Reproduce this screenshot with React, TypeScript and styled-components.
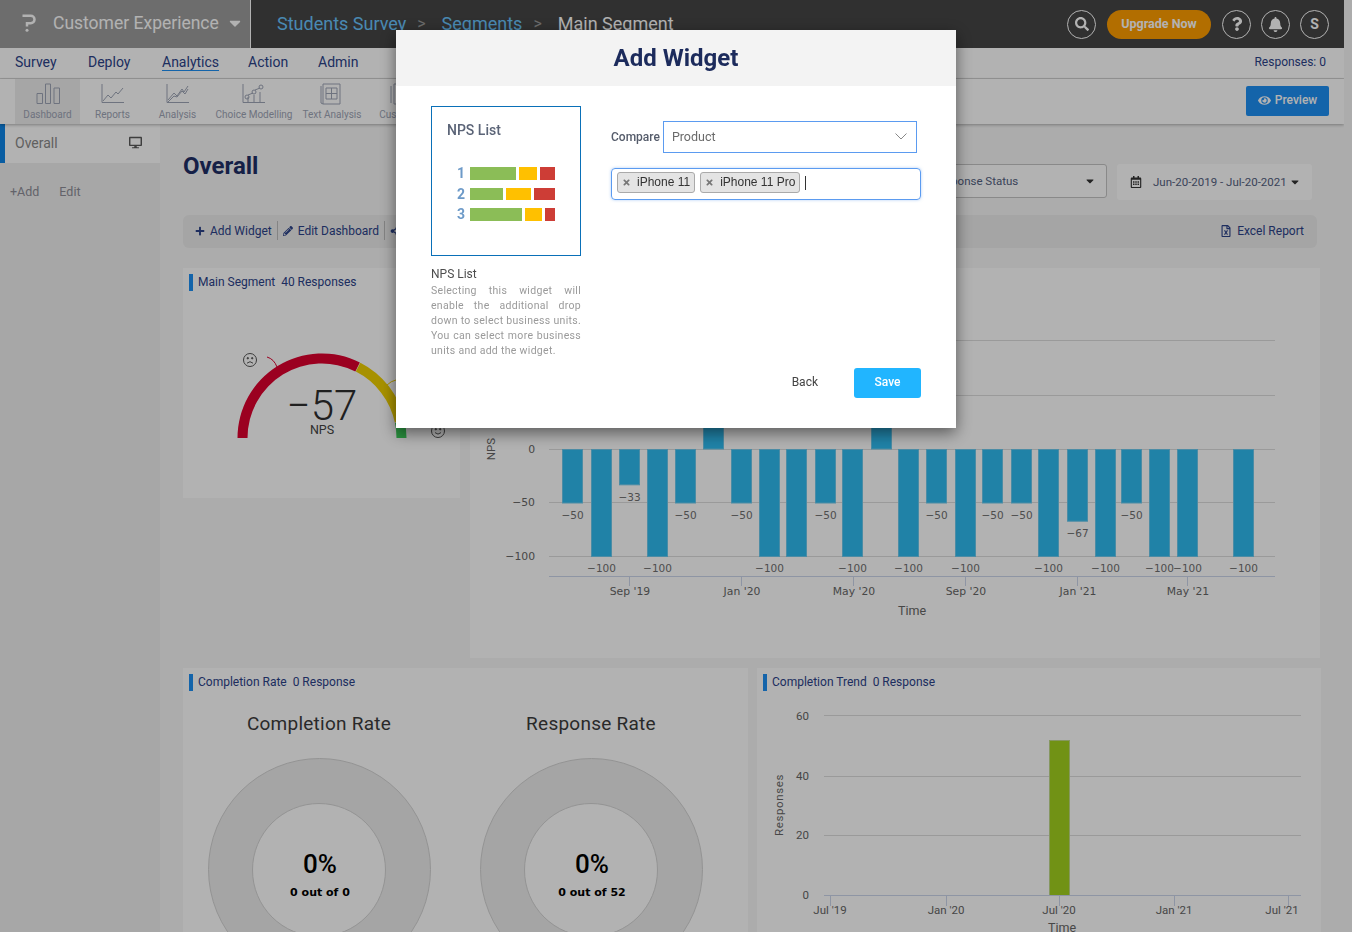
import React from "react";
import styled, { createGlobalStyle } from "styled-components";
import {
  FaBell,
  FaCaretDown,
  FaDesktop,
  FaEye,
  FaPencilAlt,
  FaPlus,
  FaQuestion,
  FaRegCalendarAlt,
  FaRegFileExcel,
  FaSearch,
  FaShareAlt,
  FaTimes,
} from "react-icons/fa";

const GlobalStyle = createGlobalStyle`
  html, body {
    margin: 0;
    padding: 0;
    height: 932px;
    overflow: hidden;
    background: #f7f7f7;
    font-family: Roboto, "Noto Sans", sans-serif;
    color: #2b4289;
  }
  * { box-sizing: border-box; }
`;

const Shell = styled.div`
  width: 1344px;
  height: 932px;
  overflow: hidden;
`;

const TopBar = styled.header`
  height: 48px;
  background: #454545;
  display: flex;
  align-items: center;
  color: #fff;
`;

const Brand = styled.div`
  width: 251px;
  height: 48px;
  padding: 0 0 2px 22px;
  background: #9d9d9d;
  border-right: 1px solid #fff;
  display: flex;
  align-items: center;
  font-size: 17.5px;
  white-space: nowrap;
  svg:first-child { margin-right: 17px; }
  svg:last-child { margin-left: 7px; }
`;

const Crumbs = styled.div`
  display: flex;
  align-items: center;
  padding: 0 0 2px 26px;
  font-size: 18px;
  flex: 1;
`;

const Crumb = styled.span<{ $active?: boolean }>`
  color: ${(p) => (p.$active ? "#ffffff" : "#6ac5ff")};
`;

const CrumbSep = styled.span`
  color: #9a9a9a;
  font-size: 16px;
  margin: 0 16px 0 11px;
`;

const TopActions = styled.div`
  display: flex;
  align-items: center;
  gap: 10px;
  padding-right: 15px;
`;

const RoundBtn = styled.div`
  width: 29px;
  height: 29px;
  border-radius: 50%;
  border: 1px solid #fff;
  display: flex;
  align-items: center;
  justify-content: center;
  font-size: 14px;
  font-weight: 700;
`;

const Upgrade = styled.div`
  width: 104px;
  height: 29px;
  margin: 0 1px;
  border-radius: 15px;
  background: #ff9e00;
  display: flex;
  align-items: center;
  justify-content: center;
  font-size: 12.5px;
  font-weight: 700;
  padding-bottom: 1px;
`;

const MenuBar = styled.nav`
  height: 31px;
  background: #fff;
  border-bottom: 1px solid #d8d8d8;
  display: flex;
  align-items: center;
  padding: 0 18px 2px 15px;
  font-size: 14px;
  color: #2b4289;
`;

const MenuItem = styled.span<{ $active?: boolean; $w: number }>`
  width: ${(p) => p.$w}px;
  span {
    border-bottom: ${(p) => (p.$active ? "1px solid #1e90f4" : "none")};
  }
`;

const Responses = styled.span`
  margin-left: auto;
  font-size: 12px;
`;

const ToolBar = styled.div`
  height: 45px;
  background: #fff;
  display: flex;
  align-items: stretch;
  padding: 0 15px;
  box-shadow: 0 1px 3px rgba(0, 0, 0, 0.3);
  position: relative;
`;

const Tool = styled.div<{ $active?: boolean; $w: number }>`
  width: ${(p) => p.$w}px;
  background: ${(p) => (p.$active ? "#eeeeee" : "transparent")};
  display: flex;
  flex-direction: column;
  align-items: center;
  padding-top: 4px;
  font-size: 10px;
  color: #9ea5b6;
  white-space: nowrap;
  svg { margin-bottom: 4px; }
`;

const PreviewBtn = styled.div`
  margin: 7px 0 8px auto;
  width: 83px;
  padding-bottom: 2px;
  background: #1e90f4;
  border-radius: 2px;
  color: #fff;
  font-size: 12px;
  font-weight: 500;
  display: flex;
  align-items: center;
  justify-content: center;
  gap: 4px;
`;

const Content = styled.div`
  display: flex;
  height: 808px;
`;

const SideBar = styled.aside`
  width: 160px;
  background: #f0f0f0;
  flex-shrink: 0;
`;

const SideItem = styled.div`
  height: 39px;
  background: #fff;
  border-left: 5px solid #0e86e8;
  padding: 0 18px 2px 10px;
  display: flex;
  align-items: center;
  justify-content: space-between;
  font-size: 14px;
  color: #8a8a8a;
  svg { color: #5a5a5a; }
`;

const SideLinks = styled.div`
  display: flex;
  gap: 20px;
  padding: 21px 10px;
  font-size: 12.5px;
  color: #8e8e98;
`;

const Main = styled.main`
  flex: 1;
  padding: 28px 23px 0;
`;

const TitleRow = styled.div`
  height: 63px;
  display: flex;
  justify-content: space-between;
`;

const PageTitle = styled.h1`
  margin: 0;
  font-size: 24px;
  line-height: 28px;
  font-weight: 700;
  color: #1f2f66;
`;

const Filters = styled.div`
  display: flex;
  gap: 10px;
  margin: 12px 9px 0 0;
  font-size: 11.5px;
  color: #54617f;
`;

const StatusSelect = styled.div`
  width: 188px;
  height: 34px;
  border: 1px solid #c4c4c4;
  border-radius: 3px;
  background: #fff;
  display: flex;
  align-items: center;
  justify-content: space-between;
  padding: 0 10px 0 12px;
`;

const DateBox = styled.div`
  width: 195px;
  height: 36px;
  border-radius: 3px;
  background: #fff;
  display: flex;
  align-items: center;
  gap: 2px;
  padding: 0 0 1px 13px;
  span { margin-left: 9px; }
`;

const ActionBar = styled.div`
  height: 33px;
  margin-right: 4px;
  background: #ececec;
  border-radius: 6px;
  display: flex;
  align-items: center;
  padding: 0 13px 2px 12px;
  font-size: 12px;
  color: #2b4289;
`;

const ActionItem = styled.span`
  display: flex;
  align-items: center;
  gap: 5px;
  padding-right: 5px;
  margin-right: 5px;
  height: 19px;
  border-right: 1px solid #bdbdbd;
`;

const ExcelLink = styled.span`
  margin-left: auto;
  display: flex;
  align-items: center;
  gap: 5px;
`;

const UpperGrid = styled.div`
  display: grid;
  grid-template-columns: 277px 850px;
  gap: 10px;
  margin-top: 20px;
  align-items: start;
`;

const LowerGrid = styled.div`
  display: grid;
  grid-template-columns: 565px 564px;
  gap: 9px;
  margin-top: 10px;
`;

const Card = styled.section<{ $h: number }>`
  height: ${(p) => p.$h}px;
  background: #fff;
  padding-top: 6px;
  overflow: hidden;
`;

const CardHead = styled.div`
  height: 17px;
  margin-left: 6px;
  padding-left: 5px;
  border-left: 4px solid #1e90f4;
  font-size: 12px;
  line-height: 16px;
  color: #2b4289;
  white-space: pre;
`;

const NoHead = styled.div`
  height: 17px;
`;

const ChartSvg = styled.svg`
  display: block;
  margin-top: 6px;
  font-family: Roboto, sans-serif;
`;

const RateGrid = styled.div`
  display: grid;
  grid-template-columns: 272px 272px;
`;

const RateCol = styled.div`
  display: flex;
  flex-direction: column;
  align-items: center;
`;

const RateTitle = styled.div`
  margin-top: 21px;
  font-size: 19px;
  line-height: 24px;
  color: #3c3c3c;
  letter-spacing: 0.25px;
`;

const Donut = styled.div`
  margin-top: 22px;
  width: 223px;
  height: 223px;
  border-radius: 50%;
  background: #ececec;
  border: 1px solid #d4d4d4;
  display: flex;
  align-items: center;
  justify-content: center;
  flex-shrink: 0;
`;

const DonutHole = styled.div`
  width: 134px;
  height: 134px;
  border-radius: 50%;
  background: #fff;
  border: 1px solid #d4d4d4;
  display: flex;
  flex-direction: column;
  align-items: center;
  justify-content: center;
  color: #000;
  padding: 8px 0 0 2px;
`;

const DonutPct = styled.div`
  font-size: 26px;
  line-height: 30px;
  font-weight: 500;
`;

const DonutNote = styled.div`
  font-family: "DejaVu Sans", sans-serif;
  font-size: 11px;
  font-weight: 700;
  margin-top: 7px;
`;

const Overlay = styled.div`
  position: fixed;
  inset: 0;
  background: rgba(0, 0, 0, 0.3);
  display: flex;
  justify-content: center;
  padding-top: 30px;
`;

const Modal = styled.div`
  width: 560px;
  height: 398px;
  background: #fff;
  box-shadow: 0 5px 15px rgba(0, 0, 0, 0.5);
  display: flex;
  flex-direction: column;
`;

const ModalHead = styled.div`
  height: 56px;
  background: #f3f3f3;
  display: flex;
  align-items: center;
  justify-content: center;
  font-size: 24px;
  font-weight: 700;
  color: #1c2b5c;
`;

const ModalBody = styled.div`
  flex: 1;
  display: flex;
  gap: 30px;
  padding: 20px 35px 30px;
`;

const LeftCol = styled.div`
  width: 150px;
`;

const Thumb = styled.div`
  width: 150px;
  height: 150px;
  border: 1px solid #0a70b8;
  padding: 14px 15px;
`;

const ThumbTitle = styled.div`
  font-size: 14px;
  font-weight: 500;
  line-height: 18px;
  color: #5b6477;
  margin-bottom: 28px;
`;

const ThumbRow = styled.div`
  display: flex;
  align-items: center;
  height: 12.5px;
  margin-bottom: 8px;
  padding-left: 10px;
  gap: 3px;
  b {
    width: 10px;
    font-size: 14px;
    color: #6d9ac8;
  }
`;

const Seg = styled.i<{ $w: number; $c: string }>`
  display: block;
  height: 12.5px;
  width: ${(p) => p.$w}px;
  background: ${(p) => p.$c};
`;

const WidgetName = styled.div`
  margin-top: 11px;
  font-size: 12px;
  line-height: 15px;
  color: #4d4d4d;
`;

const WidgetDesc = styled.p`
  margin: 1px 0 0;
  font-size: 10.5px;
  line-height: 15px;
  letter-spacing: 0.3px;
  color: #9a9a9a;
  text-align: justify;
`;

const RightCol = styled.div`
  flex: 1;
  display: flex;
  flex-direction: column;
  padding-top: 15px;
`;

const CompareRow = styled.div`
  display: flex;
  align-items: center;
  gap: 3px;
  font-size: 12px;
  font-weight: 500;
  color: #555c6b;
`;

const CompareSelect = styled.div`
  width: 254px;
  height: 32px;
  border: 1px solid #5b9bf0;
  display: flex;
  align-items: center;
  justify-content: space-between;
  padding: 0 9px 2px 8px;
  font-size: 12.5px;
  font-weight: 400;
  color: #6a6a6a;
`;

const TagInput = styled.div`
  margin-top: 15px;
  height: 32px;
  border: 1px solid #5b9bf0;
  border-radius: 4px;
  box-shadow: 0 0 3px rgba(91, 155, 240, 0.5);
  display: flex;
  align-items: center;
  gap: 5px;
  padding: 0 0 3px 5px;
`;

const Tag = styled.span`
  height: 21px;
  border: 1px solid #aaa;
  border-radius: 3px;
  background: #e4e4e4;
  display: flex;
  align-items: center;
  gap: 6px;
  padding: 0 4px 1px;
  font-family: "Liberation Sans", sans-serif;
  font-size: 12px;
  color: #333;
  svg { color: #777; }
`;

const Caret = styled.span`
  width: 1px;
  height: 14px;
  background: #333;
`;

const ModalFooter = styled.div`
  margin-top: auto;
  display: flex;
  justify-content: flex-end;
  align-items: center;
  gap: 36px;
  font-size: 12px;
  color: #444;
  span { margin-bottom: 2px; }
`;

const SaveBtn = styled.div`
  width: 67px;
  height: 30px;
  padding-bottom: 2px;
  border-radius: 3px;
  background: #21b5ff;
  color: #fff;
  font-weight: 500;
  display: flex;
  align-items: center;
  justify-content: center;
`;

const bars: [number, number][] = [
  [562, -50], [591, -100], [619, -33], [647, -100], [675, -50], [703, 50],
  [731, -50], [759, -100], [786, -100], [815, -50], [842, -100], [871, 50],
  [898, -100], [926, -50], [955, -100], [982, -50], [1011, -50], [1038, -100],
  [1067, -67], [1095, -100], [1121, -50], [1149, -100], [1177, -100], [1233, -100],
];

const npsGrid = [340, 395, 449, 502, 556];

const npsTicks: [number, string][] = [
  [629, "Sep '19"], [741, "Jan '20"], [853, "May '20"],
  [965, "Sep '20"], [1077, "Jan '21"], [1187, "May '21"],
];

const trendTicks: [number, string, number][] = [
  [830, "Jul '19", 830], [946, "Jan '20", 946], [1059, "Jul '20", 1059],
  [1174, "Jan '21", 1174], [1288, "Jul '21", 1282],
];

const npsY = (v: number) => 449 - v * 1.07;

const NpsChart = () => (
  <ChartSvg width={850} height={361} viewBox="470 297 850 361">
    {npsGrid.map((y) => (
      <line key={y} x1={549} x2={1275} y1={y + 0.5} y2={y + 0.5} stroke="#dddddd" />
    ))}
    {[["0", 449], ["\u221250", 502], ["\u2212100", 556]].map(([t, y]) => (
      <text key={t} x={535} y={Number(y) + 4} textAnchor="end" fontSize={10.8} fill="#666" fontFamily="DejaVu Sans">
        {t}
      </text>
    ))}
    <text transform="translate(495 449) rotate(-90)" textAnchor="middle" fontSize={11.5} fill="#666">NPS</text>
    {bars.map(([x, v]) => (
      <rect
        key={x}
        x={x + 0.5}
        y={v < 0 ? 449.5 : npsY(v)}
        width={20}
        height={Math.abs(v) * 1.07}
        fill="#2ebbf0"
        stroke="#6cc9ec"
      />
    ))}
    {bars.filter(([x, v]) => v < 0 && x !== 786).map(([x, v]) => (
      <text
        key={x}
        x={x + 10.5}
        y={Math.floor(npsY(v)) + (v === -100 ? 16 : 17)}
        textAnchor="middle"
        fontSize={10.5}
        fill="#707070"
        fontFamily="DejaVu Sans"
      >
        {`\u2212${-v}`}
      </text>
    ))}
    <line x1={549} x2={1275} y1={576.5} y2={576.5} stroke="#ccd6eb" />
    {npsTicks.map(([x, label]) => (
      <g key={label}>
        <line x1={x + 0.5} x2={x + 0.5} y1={577} y2={586} stroke="#ccd6eb" />
        <text x={x + 1} y={595} textAnchor="middle" fontSize={10.8} fill="#666" fontFamily="DejaVu Sans">{label}</text>
      </g>
    ))}
    <text x={912} y={615} textAnchor="middle" fontSize={12.5} fill="#666">Time</text>
  </ChartSvg>
);

const TrendChart = () => (
  <ChartSvg width={564} height={235} viewBox="757 697 564 235">
    {[715, 776, 835].map((y) => (
      <line key={y} x1={824} x2={1301} y1={y + 0.5} y2={y + 0.5} stroke="#dddddd" />
    ))}
    {[[60, 720], [40, 780], [20, 839], [0, 899]].map(([v, y]) => (
      <text key={v} x={809} y={y} textAnchor="end" fontSize={11.5} fill="#666">{v}</text>
    ))}
    <text transform="translate(783 805) rotate(-90)" textAnchor="middle" fontSize={11.5} fill="#666" letterSpacing={0.6}>Responses</text>
    <rect x={1049.5} y={740.5} width={20} height={155} fill="#a2d11f" stroke="#c0d98b" />
    <line x1={824} x2={1301} y1={895.5} y2={895.5} stroke="#ccd6eb" />
    {trendTicks.map(([x, label, tx]) => (
      <g key={label}>
        <line x1={x + 0.5} x2={x + 0.5} y1={896} y2={906} stroke="#ccd6eb" />
        <text x={tx} y={914} textAnchor="middle" fontSize={11.5} fill="#666">{label}</text>
      </g>
    ))}
    <text x={1062} y={932} textAnchor="middle" fontSize={12.5} fill="#666">Time</text>
  </ChartSvg>
);

// slice of the half gauge, angles in degrees from +x
const arc = (a: number, b: number) => {
  const cx = 322;
  const cy = 438;
  const pt = (r: number, d: number) => {
    const t = (d * Math.PI) / 180;
    return `${(cx + r * Math.cos(t)).toFixed(2)} ${(cy - r * Math.sin(t)).toFixed(2)}`;
  };
  return `M${pt(84.5, a)} A84.5 84.5 0 0 1 ${pt(84.5, b)} L${pt(74.5, b)} A74.5 74.5 0 0 0 ${pt(74.5, a)} Z`;
};

const Face = ({ x, y, sad }: { x: number; y: number; sad?: boolean }) => (
  <g fill="none" stroke="#555" strokeWidth={1}>
    <circle cx={x} cy={y} r={6.5} />
    <circle cx={x - 2.2} cy={y - 1.8} r={0.7} fill="#555" />
    <circle cx={x + 2.2} cy={y - 1.8} r={0.7} fill="#555" />
    <path d={sad ? `M${x - 3} ${y + 3.2}q3 -3 6 0` : `M${x - 3} ${y + 1.6}q3 3 6 0`} />
  </g>
);

const Gauge = () => (
  <ChartSvg width={277} height={201} viewBox="183 297 277 201">
    <path d={arc(180, 63.4)} fill="#de002e" />
    <path d={arc(63, 12)} fill="#f0d000" />
    <path d={arc(11.6, 0)} fill="#3ccf5a" />
    <path d="M267 357q7 2 10 10" fill="none" stroke="#de002e" />
    <path d="M387 385q4-4 9-5" fill="none" stroke="#f0d000" />
    <Face x={250} y={360} sad />
    <Face x={438} y={431} />
    <text x={322} y={420} textAnchor="middle" fontSize={42} fontWeight={300} fill="#2f2f2f">{"\u221257"}</text>
    <text x={322} y={434} textAnchor="middle" fontSize={12.5} fill="#444">NPS</text>
  </ChartSvg>
);

const Logo = () => (
  <svg width={14} height={18} viewBox="0 0 14 18" fill="none">
    <path d="M0.500 1.800h8.300a3.600 3.600 0 0 1 0 7.400H5v3.300" stroke="#fff" strokeWidth={2.5} />
    <circle cx={5} cy={16.200} r={1.500} fill="#fff" />
  </svg>
);

const ToolIcon = ({ d }: { d: string }) => (
  <svg width={26} height={22} viewBox="0 0 26 22" fill="none" stroke="#9ea5b6" strokeWidth={1}>
    <path d={d} />
  </svg>
);

const tools = [
  { label: "Dashboard", w: 65, active: true, d: "M2 10.500h5.500v10H2zM10.500 1h5v19.500h-5zM19 5h5.500v15.500H19z" },
  { label: "Reports", w: 65, d: "M2 1v18.500h22M3 18l5-6 3 3 5-6 2 2 5-6" },
  { label: "Analysis", w: 65, d: "M2 1v18.500h22M3 17l6-7 3 3 5-7 2 3 4-6M3 19l6-6 3 1 5-6 3 3 3-5" },
  { label: "Choice Modelling", w: 88, d: "M2 1v18.500h22M7 19v-5M13 19v-7M19 19V9M4 14a2 2 0 1 0 4 0a2 2 0 1 0-4 0M11 9a2 2 0 1 0 4 0a2 2 0 1 0-4 0M18 4a2 2 0 1 0 4 0a2 2 0 1 0-4 0M7 12l5-2M14 7l5-2" },
  { label: "Text Analysis", w: 68, d: "M4 1h17v20H4zM2 3v17l2 1M7 5h11v11H7zM7 10.500h11M12.500 5v11" },
  { label: "Customer", w: 70, d: "M6 1h17v20H6zM3 3v17" },
];

const menu: [string, number][] = [
  ["Survey", 73],
  ["Deploy", 74],
  ["Analytics", 86],
  ["Action", 70],
  ["Admin", 60],
];

export default function App() {
  return (
    <>
      <GlobalStyle />
      <Shell>
        <TopBar>
          <Brand>
            <Logo />
            Customer Experience
            <FaCaretDown size={18} />
          </Brand>
          <Crumbs>
            <Crumb>Students Survey</Crumb>
            <CrumbSep>&gt;</CrumbSep>
            <Crumb>Segments</Crumb>
            <CrumbSep>&gt;</CrumbSep>
            <Crumb $active>Main Segment</Crumb>
          </Crumbs>
          <TopActions>
            <RoundBtn><FaSearch size={14} /></RoundBtn>
            <Upgrade>Upgrade Now</Upgrade>
            <RoundBtn><FaQuestion size={14} /></RoundBtn>
            <RoundBtn><FaBell size={15} /></RoundBtn>
            <RoundBtn>S</RoundBtn>
          </TopActions>
        </TopBar>
        <MenuBar>
          {menu.map(([label, w]) => (
            <MenuItem key={label} $w={w} $active={label === "Analytics"}>
              <span>{label}</span>
            </MenuItem>
          ))}
          <Responses>Responses: 0</Responses>
        </MenuBar>
        <ToolBar>
          {tools.map((t) => (
            <Tool key={t.label} $w={t.w} $active={t.active}>
              <ToolIcon d={t.d} />
              {t.label}
            </Tool>
          ))}
          <PreviewBtn><FaEye size={13} /> Preview</PreviewBtn>
        </ToolBar>
        <Content>
          <SideBar>
            <SideItem>Overall <FaDesktop size={13} /></SideItem>
            <SideLinks><span>+Add</span><span>Edit</span></SideLinks>
          </SideBar>
          <Main>
            <TitleRow>
              <PageTitle>Overall</PageTitle>
              <Filters>
                <StatusSelect>
                  <span>Response Status</span>
                  <FaCaretDown size={12} color="#333" />
                </StatusSelect>
                <DateBox>
                  <FaRegCalendarAlt size={12} color="#333" />
                  <span>Jun-20-2019 - Jul-20-2021</span>
                  <FaCaretDown size={12} color="#333" />
                </DateBox>
              </Filters>
            </TitleRow>
            <ActionBar>
              <ActionItem><FaPlus size={10} /> Add Widget</ActionItem>
              <ActionItem><FaPencilAlt size={10} /> Edit Dashboard</ActionItem>
              <FaShareAlt size={10} />
              <ExcelLink><FaRegFileExcel size={12} /> Excel Report</ExcelLink>
            </ActionBar>
            <UpperGrid>
              <Card $h={230}>
                <CardHead>Main Segment  40 Responses</CardHead>
                <Gauge />
              </Card>
              <Card $h={390}>
                <NoHead />
                <NpsChart />
              </Card>
            </UpperGrid>
            <LowerGrid>
              <Card $h={264}>
                <CardHead>Completion Rate  0 Response</CardHead>
                <RateGrid>
                  <RateCol>
                    <RateTitle>Completion Rate</RateTitle>
                    <Donut>
                      <DonutHole>
                        <DonutPct>0%</DonutPct>
                        <DonutNote>0 out of 0</DonutNote>
                      </DonutHole>
                    </Donut>
                  </RateCol>
                  <RateCol>
                    <RateTitle>Response Rate</RateTitle>
                    <Donut>
                      <DonutHole>
                        <DonutPct>0%</DonutPct>
                        <DonutNote>0 out of 52</DonutNote>
                      </DonutHole>
                    </Donut>
                  </RateCol>
                </RateGrid>
              </Card>
              <Card $h={264}>
                <CardHead>Completion Trend  0 Response</CardHead>
                <TrendChart />
              </Card>
            </LowerGrid>
          </Main>
        </Content>
      </Shell>
      <Overlay>
        <Modal>
          <ModalHead>Add Widget</ModalHead>
          <ModalBody>
            <LeftCol>
              <Thumb>
                <ThumbTitle>NPS List</ThumbTitle>
                <ThumbRow>
                  <b>1</b>
                  <Seg $w={46} $c="#8bbd57" /><Seg $w={18} $c="#ffc000" /><Seg $w={15} $c="#cd3d36" />
                </ThumbRow>
                <ThumbRow>
                  <b>2</b>
                  <Seg $w={33} $c="#8bbd57" /><Seg $w={25} $c="#ffc000" /><Seg $w={21} $c="#cd3d36" />
                </ThumbRow>
                <ThumbRow>
                  <b>3</b>
                  <Seg $w={52} $c="#8bbd57" /><Seg $w={17} $c="#ffc000" /><Seg $w={10} $c="#cd3d36" />
                </ThumbRow>
              </Thumb>
              <WidgetName>NPS List</WidgetName>
              <WidgetDesc>
                Selecting this widget will enable the additional drop down to select business units. You can select more business units and add the widget.
              </WidgetDesc>
            </LeftCol>
            <RightCol>
              <CompareRow>
                Compare
                <CompareSelect>
                  Product
                  <svg width={12} height={7} viewBox="0 0 12 7" fill="none" stroke="#888">
                    <path d="M0.500 0.500L6 6l5.500-5.500" />
                  </svg>
                </CompareSelect>
              </CompareRow>
              <TagInput>
                <Tag><FaTimes size={9} /> iPhone 11</Tag>
                <Tag><FaTimes size={9} /> iPhone 11 Pro</Tag>
                <Caret />
              </TagInput>
              <ModalFooter>
                <span>Back</span>
                <SaveBtn>Save</SaveBtn>
              </ModalFooter>
            </RightCol>
          </ModalBody>
        </Modal>
      </Overlay>
    </>
  );
}
